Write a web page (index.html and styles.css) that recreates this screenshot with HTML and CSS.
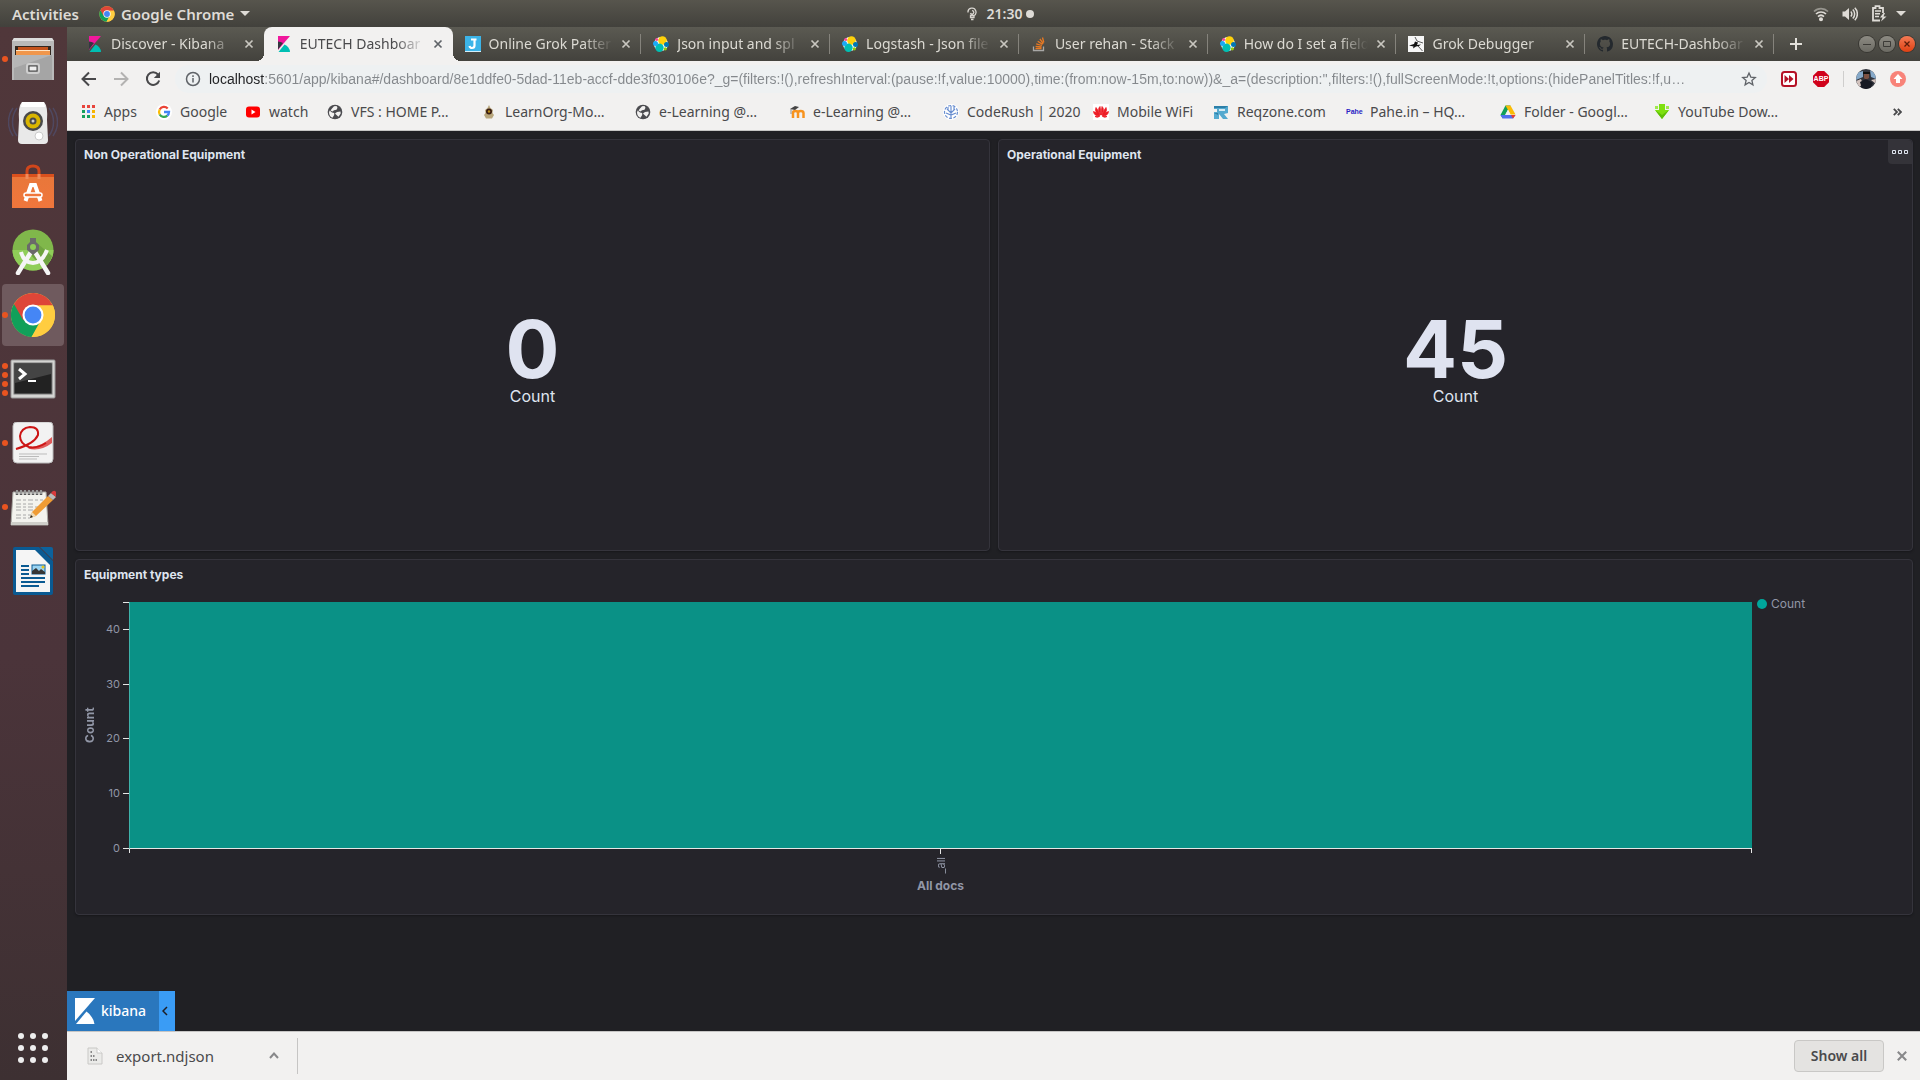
FILE: index.html
```html
<!DOCTYPE html>
<html lang="en">
<head>
<meta charset="utf-8">
<title>EUTECH Dashboard - Kibana</title>
<link rel="stylesheet" href="styles.css">
</head>
<body>
<svg class="defs" aria-hidden="true">
  <symbol id="i-chrome" viewBox="0 0 48 48">
    <circle cx="24" cy="24" r="23" fill="#ffcd40"/>
    <path d="M24 24 4.100 12.500A23 23 0 0 0 22.500 47L34 29.800Z" fill="#11a05a"/>
    <path d="M4.100 12.500A23 23 0 0 1 44.700 14H24L14 29.800Z" fill="#de4638"/>
    <path d="M24 24H35L22.500 47 24 47A23 23 0 0 0 44.700 14L30 14Z" fill="#ffcd40"/>
    <circle cx="24" cy="24" r="11" fill="#fff"/><circle cx="24" cy="24" r="8.800" fill="#4586f5"/>
  </symbol>
  <symbol id="i-kibana" viewBox="0 0 16 16">
    <path d="M2 0H14L2 14Z" fill="#f0189c"/><path d="M2 5.500a12 12 0 0 1 5 1.600L2 13.500Z" fill="#343741"/>
    <path d="M2.500 16 8.500 8.500A9 9 0 0 1 14 16Z" fill="#00bfb3"/>
  </symbol>
  <symbol id="i-elastic" viewBox="0 0 16 16">
    <circle cx="8" cy="8" r="7" fill="#fff"/><circle cx="9.500" cy="4.500" r="4.300" fill="#fed10a"/>
    <circle cx="6.500" cy="11.700" r="4.200" fill="#00bfb3"/><circle cx="3.700" cy="3.500" r="1.600" fill="#f04e98"/>
    <circle cx="2.500" cy="7.500" r="2.500" fill="#1ba9f5"/><circle cx="13.500" cy="8.600" r="2.500" fill="#0077b5"/>
    <circle cx="12.300" cy="12.800" r="1.600" fill="#93c90e"/>
  </symbol>
  <symbol id="i-close" viewBox="0 0 10 10"><path d="M1.500 1.500 8.500 8.500M8.500 1.500 1.500 8.500" stroke="currentColor" stroke-width="1.700" fill="none"/></symbol>
  <symbol id="i-globe" viewBox="0 0 16 16">
    <circle cx="8" cy="8" r="7.300" fill="#4b4b4f"/>
    <path d="M2.600 6.500 5 8.600 7.200 9v2l-1.700 2.800A6 6 0 0 1 2 8.500ZM7 2.200l2.500-.200 1 1.800-1 2-2.500.500-1.500 1.200-2-1L5 4.500ZM10 8l3.500-.500.200 2-2.200 3.300L9.500 11 8 9.500Z" fill="#f2f1f0"/>
  </symbol>
</svg>

<header class="topbar">
  <button class="top-item">Activities</button>
  <button class="top-item app-menu"><svg width="16" height="16"><use href="#i-chrome"/></svg>Google Chrome<span class="caret"></span></button>
  <div class="clock">
    <svg width="10" height="14" viewBox="0 0 10 14" fill="none" stroke="#d8d5d0" stroke-width="1.300"><path d="M1 5.500a4 4 0 1 1 5.500 3.300M3.500 6a1.700 1.700 0 1 0 1.500-2.300M3.500 8.500H7v2H3.500ZM4 12.500H6.500"/></svg>
    <time>21:30</time><span class="dot"></span>
  </div>
  <div class="tray">
    <svg width="16" height="16" viewBox="0 0 16 16" fill="none" stroke="#dedbd6" stroke-width="1.700"><path d="M1 5.500a10 10 0 0 1 14 0" opacity=".5"/><path d="M3 8a7.200 7.200 0 0 1 10 0M5 10.600a4.500 4.500 0 0 1 6 0"/><circle cx="8" cy="13.300" r="1.200" fill="#dedbd6"/></svg>
    <svg width="16" height="16" viewBox="0 0 16 16" fill="none" stroke="#dedbd6" stroke-width="1.500"><path d="M.5 5.500H3L7 2v12L3 10.500H.5Z" fill="#dedbd6" stroke="none"/><path d="M8.800 5.500a3.500 3.500 0 0 1 0 5M10.800 3.500a6.400 6.400 0 0 1 0 9M12.800 1.800a8.800 8.800 0 0 1 0 12.400"/></svg>
    <svg width="16" height="17" viewBox="0 0 16 17" fill="none" stroke="#dedbd6" stroke-width="1.800"><path d="M9 15.500H2V3H4.500V1.200H8.500V3H12V8"/><path d="M4 6H10M4 8.800H9M4 11.600H8" stroke-width="1.500"/><path d="M12.500 8 9 12.500H11.500L10 16.500 15.500 11.500H12.500L14 8Z" fill="#dedbd6" stroke="none"/></svg>
    <span class="caret"></span>
  </div>
</header>

<div class="desktop">
<nav class="launcher" aria-label="Launcher">
  <button class="launch" aria-label="Files"><span class="pips"><i></i></span>
    <svg width="44" height="46" viewBox="0 0 44 46"><path d="M3 2H41L43 5V44H1V5Z" fill="#b9b9b9"/><path d="M3 2H41L43 5H1Z" fill="#dcdcdc"/><path d="M4 10H40V22H4Z" fill="#33271f"/><path d="M7 11H37V20H7Z" fill="#c4531c"/><path d="M5 14H39V20H5Z" fill="#f0964b"/><path d="M5 14H39V15H5Z" fill="#ffe4c4"/><path d="M3 19H41V44H3Z" fill="#a5a5a5"/><path d="M3 19H41L3 32Z" fill="#b6b6b6"/><rect x="16" y="28" width="12" height="9" rx="2" fill="#9c9c9c" stroke="#cfcfcf" stroke-width="2"/><rect x="18" y="30" width="8" height="5" fill="#eee" stroke="#444"/></svg></button>
  <button class="launch" aria-label="Rhythmbox">
    <svg width="50" height="46" viewBox="0 0 50 46"><g fill="none" stroke="#4f5a86" stroke-width="1.500" opacity=".5"><path d="M9 8a24 24 0 0 0 0 28M5 8a24 24 0 0 0 0 28M41 8a24 24 0 0 1 0 28M45 8a24 24 0 0 1 0 28"/></g><path d="M14 2H36Q40 6 39 20L40 40Q40 44 36 44H14Q10 44 10 40L11 20Q10 6 14 2Z" fill="#e9e9e9"/><path d="M14 2H36L37 7H13Z" fill="#fff"/><circle cx="25" cy="21" r="10" fill="#4a4a4a"/><circle cx="25" cy="21" r="7.500" fill="#d9b500"/><circle cx="25" cy="21" r="3.500" fill="#4a4a4a"/><circle cx="25" cy="21" r="1.500" fill="#d0d0d0"/><circle cx="31" cy="36" r="4" fill="#fff" stroke="#ccc"/></svg></button>
  <button class="launch" aria-label="Ubuntu Software">
    <svg width="44" height="46" viewBox="0 0 44 46"><defs><linearGradient id="bag" x2="0" y2="1"><stop stop-color="#e8773a"/><stop offset="1" stop-color="#f0763c"/></linearGradient></defs><path d="M16 16V7Q16 2 22 2T28 7V16" fill="none" stroke="#d0461b" stroke-width="3"/><path d="M1 10H43V44H1Z" fill="url(#bag)"/><path d="M1 10H43V13H1Z" fill="#d9501d"/><path d="M16 10V15M28 10V15" stroke="#ef8b5c" stroke-width="3"/><path d="M14.500 37 20 21H24L29.500 37" fill="none" stroke="#fff" stroke-width="4"/><rect x="13" y="29" width="18" height="4" rx="2" fill="#f0763c" stroke="#fff" stroke-width="1.500"/></svg></button>
  <button class="launch" aria-label="Android Studio">
    <svg width="44" height="48" viewBox="0 0 44 48"><circle cx="22" cy="23" r="20.500" fill="#80b74b"/><path d="M1.500 23a20.500 20.500 0 0 0 41 0Z" fill="#8fce58"/><path d="M26 16 41 29A20.500 20.500 0 0 1 32 41L18 26Z" fill="#6fa341"/><path d="M20 25 7 46M24 25 37 46" stroke="#f5f5f5" stroke-width="4.500" stroke-linecap="round"/><path d="M10 25Q13 36 22 36T36 23" fill="none" stroke="#f5f5f5" stroke-width="4"/><path d="M19 11H25V15L28 18V23L22 28 16 23V18L19 15Z" fill="#6a6a6a"/><circle cx="22" cy="20" r="3" fill="#8fce58"/></svg></button>
  <button class="launch active" aria-label="Google Chrome"><span class="pips"><i></i></span>
    <svg width="46" height="46"><use href="#i-chrome"/></svg></button>
  <button class="launch" aria-label="Terminal"><span class="pips"><i></i><i></i><i></i><i></i></span>
    <svg width="46" height="40" viewBox="0 0 46 40"><rect x="1" y="1" width="44" height="38" rx="1" fill="#d4d4d2" stroke="#999"/><rect x="4" y="4" width="38" height="31" fill="#222" stroke="#777"/><path d="M5 5H41V15L5 24Z" fill="#444"/><path d="M9 10 15 15 9 20" fill="none" stroke="#fff" stroke-width="3"/><path d="M18 22H26" stroke="#fff" stroke-width="2"/></svg></button>
  <button class="launch" aria-label="Document Viewer"><span class="pips"><i></i></span>
    <svg width="42" height="42" viewBox="0 0 42 42"><rect x="1" y="0" width="40" height="41" rx="4" fill="#f2f2f2" stroke="#bbb"/><path d="M18 25.500Q30 24 40 15V21Q28 30 16 26.500Z" fill="#e05a5a"/><path d="M4 27Q22 22 26 13 27 5 18 5 9 6 8 14 8 22 17 25 24 27 34 21" fill="none" stroke="#cc1515" stroke-width="2"/><path d="M7 32H35M7 34.500H27M7 37H25" stroke="#bbb"/></svg></button>
  <button class="launch" aria-label="Text Editor"><span class="pips"><i></i></span>
    <svg width="46" height="40" viewBox="0 0 46 40"><path d="M3 5H36L38 38H1Z" fill="#f3f3ee" stroke="#a9a9a4"/><path d="M1 35H38V38H1Z" fill="#cfcfca"/><g stroke="#a8a8a8" stroke-dasharray="5 2 3 2"><path d="M6 13H33M6 17H25M6 20H33M6 23H28M6 28H22M6 31H20"/></g><path d="M7 3V8M11 3V8M15 3V8M19 3V8M23 3V8M27 3V8M31 3V8" stroke="#555" stroke-width="2.500"/><path d="M7 3V7M11 3V7M15 3V7M19 3V7M23 3V7M27 3V7M31 3V7" stroke="#ddd"/><path d="M20 31 22 25 38 9 43 13 26 29Z" fill="#ef9c35"/><path d="M38 9 41 6 46 10 43 13Z" fill="#b9b9b9"/><path d="M41 6Q44 2 46 5V10Z" fill="#d9393c"/><path d="M20 31 22 25 26 29Z" fill="#eddab6"/><path d="M20 31 21 28 23 30Z" fill="#222"/></svg></button>
  <button class="launch" aria-label="LibreOffice Writer">
    <svg width="40" height="48" viewBox="0 0 40 48"><path d="M2 0H26L40 14V46Q40 48 38 48H2Q0 48 0 46V2Q0 0 2 0Z" fill="#0a5a92"/><path d="M27 0H38Q40 0 40 2V13Z" fill="#0c629c"/><path d="M3 3H22L37 18V45H3Z" fill="#f5f5f5"/><path d="M8 19H16M8 23H16M8 27H16M8 31H32M8 35H32M8 39H26" stroke="#0a5a92" stroke-width="2"/><rect x="19" y="18" width="13" height="9" fill="#9ad4f2" stroke="#0a5a92"/><path d="M19 27V24L23 21 26 24 28 22 32 25V27Z" fill="#363636"/><circle cx="30" cy="20" r="1.500" fill="#e8c51c"/></svg></button>
  <button class="launch show-apps" aria-label="Show Applications">
    <svg width="32" height="32" viewBox="0 0 32 32" fill="#eee"><circle cx="4" cy="4" r="3"/><circle cx="16" cy="4" r="3"/><circle cx="28" cy="4" r="3"/><circle cx="4" cy="16" r="3"/><circle cx="16" cy="16" r="3"/><circle cx="28" cy="16" r="3"/><circle cx="4" cy="28" r="3"/><circle cx="16" cy="28" r="3"/><circle cx="28" cy="28" r="3"/></svg></button>
</nav>

<div class="browser">
  <div class="tabstrip">
    <div class="tabs">
      <div class="tab before-active"><svg width="16" height="16"><use href="#i-kibana"/></svg><a href="#" class="tab-title">Discover - Kibana</a><button class="tab-close" aria-label="Close tab"><svg width="10" height="10"><use href="#i-close"/></svg></button></div>
      <div class="tab current"><svg width="16" height="16"><use href="#i-kibana"/></svg><a href="#" class="tab-title">EUTECH Dashboar</a><button class="tab-close" aria-label="Close tab"><svg width="10" height="10"><use href="#i-close"/></svg></button></div>
      <div class="tab"><svg width="16" height="16" viewBox="0 0 16 16"><path d="M0 0H16V16H0Z" fill="#3cb4e8"/><path d="M0 15H16V16H0Z" fill="#d5eefa"/><path d="M6 3.500H11.500M9.500 3.500V9.500Q9.500 12 7 12 5 12 4.500 10" fill="none" stroke="#fff" stroke-width="2.200"/></svg><a href="#" class="tab-title">Online Grok Patter</a><button class="tab-close" aria-label="Close tab"><svg width="10" height="10"><use href="#i-close"/></svg></button></div>
      <div class="tab"><svg width="16" height="16"><use href="#i-elastic"/></svg><a href="#" class="tab-title">Json input and spl</a><button class="tab-close" aria-label="Close tab"><svg width="10" height="10"><use href="#i-close"/></svg></button></div>
      <div class="tab"><svg width="16" height="16"><use href="#i-elastic"/></svg><a href="#" class="tab-title">Logstash - Json file</a><button class="tab-close" aria-label="Close tab"><svg width="10" height="10"><use href="#i-close"/></svg></button></div>
      <div class="tab"><svg width="16" height="16" viewBox="0 0 16 16" fill="none" stroke-width="1.300"><path d="M2.500 10.500V14.500H12.500V10.500" stroke="#a8a8a6"/><path d="M4.500 12.500H10.500M4.600 10.300 10.600 11M5.200 7.800 10.900 9.500M6.700 5.200 11.600 8.400M8.900 3 12.300 7.600M11.500 1.500 12.800 6.500" stroke="#e87922"/></svg><a href="#" class="tab-title">User rehan - Stack</a><button class="tab-close" aria-label="Close tab"><svg width="10" height="10"><use href="#i-close"/></svg></button></div>
      <div class="tab"><svg width="16" height="16"><use href="#i-elastic"/></svg><a href="#" class="tab-title">How do I set a field</a><button class="tab-close" aria-label="Close tab"><svg width="10" height="10"><use href="#i-close"/></svg></button></div>
      <div class="tab"><svg width="16" height="16" viewBox="0 0 16 16"><path d="M0 0H16V16H0Z" fill="#f6f6f6"/><path d="M1 9.500 6 8 7 5.500 10 6.500 9 9 13 8.500 11 10 8 10.500 5 12.500 5.500 10.500Z" fill="#111"/><path d="M7 1 9 5 15 7M10 10 14.500 15" fill="none" stroke="#333" stroke-width=".8"/></svg><a href="#" class="tab-title">Grok Debugger</a><button class="tab-close" aria-label="Close tab"><svg width="10" height="10"><use href="#i-close"/></svg></button></div>
      <div class="tab"><svg width="16" height="16" viewBox="0 0 16 16"><path fill="#24292e" d="M8 0C3.580 0 0 3.580 0 8c0 3.540 2.290 6.530 5.470 7.590.4.070.55-.17.55-.38 0-.19-.01-.82-.01-1.490-2.010.37-2.530-.49-2.690-.94-.09-.23-.48-.94-.82-1.130-.28-.15-.68-.52-.01-.53.63-.01 1.080.58 1.230.82.72 1.210 1.870.87 2.330.66.070-.52.28-.87.51-1.070-1.780-.2-3.640-.89-3.640-3.950 0-.87.31-1.590.82-2.150-.08-.2-.36-1.020.08-2.120 0 0 .67-.21 2.200.82.64-.18 1.320-.27 2-.27s1.360.09 2 .27c1.530-1.040 2.200-.82 2.200-.82.44 1.100.16 1.920.08 2.120.51.56.82 1.270.82 2.150 0 3.070-1.870 3.750-3.650 3.950.29.25.54.73.54 1.480 0 1.070-.01 1.930-.01 2.200 0 .21.15.46.55.38A8.010 8.010 0 0 0 16 8c0-4.420-3.580-8-8-8z"/></svg><a href="#" class="tab-title">EUTECH-Dashboar</a><button class="tab-close" aria-label="Close tab"><svg width="10" height="10"><use href="#i-close"/></svg></button></div>
    </div>
    <button class="new-tab" aria-label="New tab"><svg width="12" height="12" viewBox="0 0 12 12"><path d="M6 0V12M0 6H12" stroke="#e3e1db" stroke-width="2"/></svg></button>
    <div class="win-buttons">
      <button class="win" aria-label="Minimize"><svg width="8" height="8" viewBox="0 0 8 8"><path d="M0 4.500H8" stroke="#3c3b37"/></svg></button>
      <button class="win" aria-label="Maximize"><svg width="8" height="8" viewBox="0 0 8 8"><path d="M.5 1.500H7.500V6.500H.5Z" fill="none" stroke="#3c3b37"/></svg></button>
      <button class="win win-close" aria-label="Close"><svg width="8" height="8" viewBox="0 0 8 8"><path d="M1.500 1.500 6.500 6.500M6.500 1.500 1.500 6.500" stroke="#5c1d0a" stroke-width="1.300"/></svg></button>
    </div>
  </div>

  <div class="toolbar">
    <button class="nav-btn" aria-label="Back"><svg width="16" height="16" viewBox="0 0 16 16" fill="none" stroke="#48484a" stroke-width="2"><path d="M15 8H2M8 1.500 1.500 8 8 14.500"/></svg></button>
    <button class="nav-btn" aria-label="Forward"><svg width="16" height="16" viewBox="0 0 16 16" fill="none" stroke="#b3b2b1" stroke-width="2"><path d="M1 8H14M8 1.500 14.500 8 8 14.500"/></svg></button>
    <button class="nav-btn" aria-label="Reload"><svg width="16" height="16" viewBox="0 0 16 16"><path d="M13 3.500A6.300 6.300 0 1 0 14.200 9.500" fill="none" stroke="#48484a" stroke-width="2"/><path d="M15 .8V7H8.800Z" fill="#48484a"/></svg></button>
    <div class="omnibox">
      <svg width="16" height="16" viewBox="0 0 16 16" fill="none" stroke="#5f6368" stroke-width="1.500"><circle cx="8" cy="8" r="6.500"/><path d="M8 7V11.500M8 4.300V6"/></svg>
      <input class="url" type="text" aria-label="Address" value="localhost:5601/app/kibana#/dashboard/8e1ddfe0-5dad-11eb-accf-dde3f030106e?_g=(filters:!(),refreshInterval:(pause:!f,value:10000),time:(from:now-15m,to:now))&amp;_a=(description:'',filters:!(),fullScreenMode:!t,options:(hidePanelTitles:!f,u…">
      <button class="plain" aria-label="Bookmark"><svg width="16" height="16" viewBox="0 0 16 16" fill="none" stroke="#5f6368" stroke-width="1.300"><path d="M8 2 9.800 6.100 14.300 6.500 10.900 9.500 11.900 13.900 8 11.500 4.100 13.900 5.100 9.500 1.700 6.500 6.200 6.100Z"/></svg></button>
    </div>
    <div class="extensions">
      <button class="plain" aria-label="Speed extension"><svg width="16" height="16" viewBox="0 0 16 16"><rect x="1" y="1" width="14" height="14" rx="2.500" fill="#fff" stroke="#b51226" stroke-width="2"/><path d="M3.500 4 8 8 3.500 12ZM8 4 12.500 8 8 12Z" fill="#b51226"/></svg></button>
      <button class="abp">ABP</button>
    </div>
    <div class="profile">
      <button class="plain" aria-label="Profile"><svg width="20" height="20" viewBox="0 0 20 20"><defs><clipPath id="av"><circle cx="10" cy="10" r="10"/></clipPath></defs><g clip-path="url(#av)"><path d="M0 0H20V20H0Z" fill="#31343c"/><path d="M0 4 7 2V8L0 11ZM14 1 20 5V10L15 8Z" fill="#86a9c9"/><path d="M0 12 5 10 7 15 3 18ZM15 11 20 10V15Z" fill="#d3c3be"/><path d="M8 4H13V9L10 11 8 9Z" fill="#7d5142"/><path d="M4 13 10 10 17 14 14 20H6Z" fill="#171a23"/><path d="M7 3H14V5H7Z" fill="#111"/></g></svg></button>
      <button class="plain" aria-label="Update"><svg width="16" height="16" viewBox="0 0 16 16"><circle cx="8" cy="8" r="8" fill="#f88379"/><path d="M8 3 12.500 8H10V12H6V8H3.500Z" fill="#fff"/></svg></button>
    </div>
  </div>

  <nav class="bookmarks" aria-label="Bookmarks">
    <a href="#"><svg width="16" height="16" viewBox="0 0 16 16"><path d="M2 1H5V4H2ZM12 1H15V4H12ZM7 1H10V4H7Z" fill="#e8453c"/><path d="M2 6H5V9H2ZM2 11H5V14H2ZM7 11H10V14H7Z" fill="#16a05d"/><path d="M7 6H10V9H7Z" fill="#4586f5"/><path d="M12 6H15V9H12ZM12 11H15V14H12Z" fill="#f6b400"/></svg>Apps</a>
    <a href="#"><svg width="16" height="16" viewBox="0 0 16 16" fill="none" stroke-width="2.300"><circle cx="8" cy="8" r="8" fill="#fff"/><path d="M3.700 5.500A5 5 0 0 1 11.700 4.500" stroke="#ea4335"/><path d="M3.700 5.500A5 5 0 0 0 3.700 10.500" stroke="#fbbc05"/><path d="M3.700 10.500A5 5 0 0 0 11.300 11.700" stroke="#34a853"/><path d="M8 8H13A5 5 0 0 1 11.300 11.700" stroke="#4285f4"/></svg>Google</a>
    <a href="#"><svg width="16" height="16" viewBox="0 0 16 16"><rect x="1" y="2.500" width="14" height="11" rx="3" fill="#f00"/><path d="M6.500 5.500 10.500 8 6.500 10.500Z" fill="#fff"/></svg>watch</a>
    <a href="#"><svg width="16" height="16"><use href="#i-globe"/></svg>VFS : HOME P…</a>
    <a href="#"><svg width="16" height="16" viewBox="0 0 16 16"><path d="M8 1 9.500 4 12 6 11.500 9 13 11 11 14.500H5L3 11 4.500 9 4 6 6.500 4Z" fill="#b8a67c"/><circle cx="8" cy="7.500" r="3" fill="#3a1d12"/><circle cx="8" cy="7.500" r="1.200" fill="#b98d1c"/></svg>LearnOrg-Mo…</a>
    <a href="#"><svg width="16" height="16"><use href="#i-globe"/></svg>e-Learning @…</a>
    <a href="#"><svg width="16" height="16" viewBox="0 0 16 16"><path d="M4 14V9Q4 7 6.500 7T9 9V14M9 14V9Q9 7 11.700 7T14.500 9V14" fill="none" stroke="#f7931e" stroke-width="2.500"/><path d="M1 5 6 2 10 3 6 6Z" fill="#444"/><path d="M2 5V10" stroke="#777" stroke-width=".8"/></svg>e-Learning @…</a>
    <a href="#"><svg width="16" height="16" viewBox="0 0 16 16"><circle cx="8" cy="8" r="8" fill="#fff"/><g fill="none" stroke="#6a8fd0" stroke-width="1.200"><circle cx="8" cy="8" r="6.500" stroke-dasharray="3 1.500"/><path d="M8 2V14M4 5 8 9 12 5M3 9 8 11 13 9M5 3V6M11 3V6"/></g></svg>CodeRush | 2020</a>
    <a href="#"><svg width="16" height="16" viewBox="0 0 16 16"><path d="M0 0H16V16H0Z" fill="#fff"/><path d="M7.500 11Q4 5 7 2.500 8 7 7.500 11ZM8.500 11Q12 5 9 2.500 8 7 8.500 11ZM7 11.500Q1 8 3 3.500 6 7 7 11.500ZM9 11.500Q15 8 13 3.500 10 7 9 11.500ZM6.500 12Q1 12 .5 7.500 5 9 6.500 12ZM9.500 12Q15 12 15.500 7.500 11 9 9.500 12ZM6.500 12.500Q4 14 2 12.500ZM9.500 12.500Q12 14 14 12.500Z" fill="#ed1c24" stroke="#ed1c24" stroke-width=".8"/></svg>Mobile WiFi</a>
    <a href="#"><svg width="16" height="16" viewBox="0 0 16 16"><path d="M1 2H15V9L11 10 15 15H10L6 10V15H1V8H4V5H1Z" fill="#54a9cf"/><path d="M6 5H12V7H6Z" fill="#d5eaf3"/><path d="M1 2H15L12 4H1ZM1 9H5V11Z" fill="#2c7fa8"/></svg>Reqzone.com</a>
    <a href="#"><span class="pahe">Pahe</span>Pahe.in – HQ…</a>
    <a href="#"><svg width="16" height="16" viewBox="0 0 16 16"><path d="M5.500 1.500H10.500L5 11 2.700 14.500 .5 11Z" fill="#11a05a"/><path d="M10.500 1.500 15.500 10.500H10.500L5.500 1.500Z" fill="#fbbc05"/><path d="M.5 11H15.500L13 14.500H2.700Z" fill="#4f6ff0"/><path d="M15.500 11 13 14.500 11 11Z" fill="#ea3c2e"/><path d="M8 5.500 10.500 10.500H5.500Z" fill="#f2f1f0"/></svg>Folder - Googl…</a>
    <a href="#"><svg width="16" height="16" viewBox="0 0 16 16"><path d="M5 0H11V6H15L8 15 1 6H5Z" fill="#7fe00f"/><path d="M1 2H4V5H1ZM12 2H15V5H12Z" fill="#9fe84c"/><path d="M1 6 8 15 15 6 8 11Z" fill="#5fbf08"/></svg>YouTube Dow…</a>
    <button class="overflow" aria-label="More bookmarks"><svg width="9" height="8" viewBox="0 0 9 8" fill="none" stroke="#48484a" stroke-width="1.800"><path d="M.8.8 4 4 .8 7.200M4.800.8 8 4 4.800 7.200"/></svg></button>
  </nav>

  <main class="page">
    <div class="panels">
      <section class="panel">
        <h2>Non Operational Equipment</h2>
        <div class="metric"><strong>0</strong><span>Count</span></div>
      </section>
      <section class="panel">
        <h2>Operational Equipment</h2>
        <button class="panel-menu" aria-label="Panel options"><svg width="16" height="4" viewBox="0 0 16 4" fill="none" stroke="#dfe5ef"><path d="M.5.500H3.500V3.500H.5ZM6.500.500H9.500V3.500H6.500ZM12.500.500H15.500V3.500H12.500Z"/></svg></button>
        <div class="metric"><strong>45</strong><span>Count</span></div>
      </section>
      <section class="panel wide">
        <h2>Equipment types</h2>
        <div class="chart">
          <div class="y-title">Count</div>
          <div class="y-axis">
            <div></div><div><span>40</span></div><div><span>30</span></div><div><span>20</span></div><div><span>10</span></div><div><span>0</span></div>
          </div>
          <div class="plot"><div class="bar" style="height:100%"></div></div>
          <div class="legend"><span class="swatch"></span>Count</div>
          <div class="x-axis"><span class="x-tick"></span><span class="x-label">_all</span><span class="x-title">All docs</span></div>
        </div>
      </section>
    </div>
    <div class="kibana-exit">
      <a href="#" class="kibana-logo"><svg width="20" height="26" viewBox="0 0 20 26" fill="#fff"><path d="M0 0H20L0 23Z"/><path d="M1 26 11.500 13.500Q18 18 19.500 26Z"/></svg>kibana</a>
      <button class="kibana-toggle" aria-label="Exit full screen"><svg width="6" height="10" viewBox="0 0 6 10"><path d="M5 1 1 5 5 9" fill="none" stroke="#1d1e24" stroke-width="1.500"/></svg></button>
    </div>
  </main>

  <footer class="downloads">
    <a href="#" class="download">
      <svg width="16" height="18" viewBox="0 0 16 18"><path d="M1 1H10L15 6V17H1Z" fill="#ebebe9" stroke="#c9c8c6"/><path d="M10 1V6H15" fill="#fff" stroke="#c9c8c6"/><path d="M3.500 5H5M3.500 9H8M3.500 13H10" stroke="#888" stroke-width="2" stroke-dasharray="1.500 1"/></svg>
      export.ndjson</a>
    <button class="plain" aria-label="Download options"><svg width="10" height="7" viewBox="0 0 10 7"><path d="M1 6 5 1.500 9 6" fill="none" stroke="#88888a" stroke-width="2"/></svg></button>
    <span class="divider"></span>
    <button class="show-all">Show all</button>
    <button class="plain dl-close" aria-label="Close downloads bar"><svg width="12" height="12"><use href="#i-close"/></svg></button>
  </footer>
</div>
</div>
</body>
</html>
```

FILE: styles.css
```css
* { box-sizing: border-box; }
body {
  margin: 0;
  min-height: 100vh;
  display: flex;
  flex-direction: column;
  font-family: "Noto Sans", "Open Sans", sans-serif;
  font-size: 14px;
  line-height: 20px;
  color: #4a4a4c;
  background: #202024;
}
button { font: inherit; color: inherit; background: none; border: 0; padding: 0; }
a { color: inherit; text-decoration: none; }
svg { display: block; flex: none; }
.defs { position: absolute; width: 0; height: 0; }

/* Desktop top bar */
.topbar {
  height: 27px;
  display: grid;
  grid-template-columns: auto 1fr auto 1fr;
  align-items: center;
  padding: 0 14px 0 12px;
  background: linear-gradient(#57554d, #42413c);
  color: #dedbd6;
  font-weight: 600;
  font-size: 15px;
}
.top-item { text-align: left; }
.app-menu { display: flex; align-items: center; gap: 6px; margin-left: 20px; }
.caret { border: 5px solid transparent; border-top-color: #dedbd6; border-bottom: 0; }
.clock { display: flex; align-items: center; gap: 10px; margin-left: 16px; font-size: 14px; }
.clock time { margin-right: -6px; }
.dot { width: 8px; height: 8px; border-radius: 50%; background: #dedbd6; }
.tray { display: flex; align-items: center; justify-content: flex-end; gap: 13px; }
.tray .caret { margin-left: -4px; }

.desktop { flex: 1; display: flex; }

/* Launcher */
.launcher {
  width: 67px;
  flex: none;
  display: flex;
  flex-direction: column;
  gap: 2px;
  padding: 1px 3px 1px 2px;
  background: linear-gradient(#50373a, #4b343a 60%, #3d3032);
}
.launch {
  position: relative;
  height: 62px;
  display: flex;
  align-items: center;
  justify-content: center;
  border-radius: 4px;
}
.launch.active { background: #6f5a5e; }
.show-apps { margin-top: auto; }
.pips {
  position: absolute;
  left: 0;
  top: 0;
  bottom: 0;
  display: flex;
  flex-direction: column;
  justify-content: center;
  gap: 3px;
}
.pips i { width: 6px; height: 6px; border-radius: 50%; background: #e95420; }

/* Browser */
.browser { flex: 1; min-width: 0; display: flex; flex-direction: column; }
.tabstrip {
  height: 34px;
  display: flex;
  align-items: stretch;
  padding: 0 5px 0 8px;
  background: linear-gradient(#5b5a52, #43423d);
  color: #dcdad3;
}
.tabs { flex: 1; min-width: 0; display: grid; grid-template-columns: repeat(9, 1fr); }
.tab {
  min-width: 0;
  display: flex;
  align-items: center;
  padding: 0 10px 0 12px;
  background: linear-gradient(#85837c, #85837c) right center / 1px 20px no-repeat;
}
.tab.before-active { background: none; }
.tab.current { position: relative; background: #f2f1f0; border-radius: 8px 8px 0 0; color: #4a4a4c; }
.tab.current::before, .tab.current::after {
  content: "";
  position: absolute;
  bottom: 0;
  width: 8px;
  height: 8px;
}
.tab.current::before { left: -8px; background: radial-gradient(circle at 0 0, transparent 8px, #f2f1f0 8px); }
.tab.current::after { right: -8px; background: radial-gradient(circle at 100% 0, transparent 8px, #f2f1f0 8px); }
.tab-title {
  flex: 1;
  min-width: 0;
  margin: 0 8px;
  overflow: hidden;
  white-space: nowrap;
  mask-image: linear-gradient(to right, #000 calc(100% - 30px), transparent);
}
.tab-close { color: #c9c7c0; }
.current .tab-close { color: #5f6368; }
.new-tab { width: 44px; display: flex; align-items: center; justify-content: center; }
.win-buttons { display: flex; align-items: center; gap: 4px; margin-left: 41px; }
.win {
  width: 16px;
  height: 16px;
  display: flex;
  align-items: center;
  justify-content: center;
  border-radius: 50%;
  background: linear-gradient(#8d8b83, #6b6a63);
  box-shadow: 0 0 0 1px #393833;
}
.win-close { background: linear-gradient(#f47b55, #df4012); }

.toolbar {
  height: 36px;
  display: flex;
  align-items: center;
  padding: 0 14px;
  background: #f2f1f0;
}
.nav-btn { margin-right: 16px; }
.omnibox {
  flex: 1;
  height: 28px;
  display: flex;
  align-items: center;
  gap: 8px;
  padding: 0 10px;
  border-radius: 14px;
  background: #eef1f2;
  margin-left: -2px;
}
.url {
  flex: 1;
  min-width: 0;
  height: 20px;
  padding: 0;
  border: 0;
  font: 14px/20px "Liberation Sans", sans-serif;
  text-overflow: ellipsis;
  color: transparent;
  background: linear-gradient(to right, #202124 56px, #84888c 56px);
  background-clip: text;
}
.extensions { display: flex; gap: 16px; align-items: center; margin-left: 14px; padding-right: 14px; border-right: 1px solid #cfcecd; }
.abp {
  width: 16px;
  height: 16px;
  background: #d0021b;
  color: #fff;
  font: bold 7px/16px "Liberation Sans", sans-serif;
  clip-path: polygon(30% 0, 70% 0, 100% 30%, 100% 70%, 70% 100%, 30% 100%, 0 70%, 0 30%);
}
.profile { display: flex; gap: 14px; align-items: center; padding-left: 12px; }

.bookmarks {
  height: 34px;
  display: grid;
  grid-template-columns: 76px 89px 82px repeat(4, 154px) 150px 120px 133px 154px 154px 1fr auto;
  align-items: center;
  padding: 0 18px 4px 13px;
  background: #f2f1f0;
  border-bottom: 1px solid #c6c5c4;
}
.bookmarks a { display: flex; align-items: center; gap: 8px; white-space: nowrap; }
.pahe { width: 16px; color: #2a1fc4; font: bold 7px/16px "Liberation Sans", sans-serif; }

/* Dashboard */
.page {
  flex: 1;
  display: flex;
  flex-direction: column;
  background: #202024;
  font-family: Inter, "Liberation Sans", sans-serif;
  color: #dfe5ef;
}
.panels {
  display: grid;
  grid-template-columns: 1fr 1fr;
  grid-template-rows: minmax(412px, auto) minmax(356px, auto);
  gap: 8px;
  padding: 8px 7px 8px 8px;
}
.panel {
  position: relative;
  display: flex;
  flex-direction: column;
  background: #25242a;
  border: 1px solid #35343c;
  border-radius: 4px;
  box-shadow: 0 1px 2px #18181b;
}
.wide { grid-column: 1 / -1; }
.panel h2 { margin: 0; padding: 5px 8px; font-size: 12px; line-height: 20px; font-weight: 700; }
.panel-menu {
  position: absolute;
  top: 0;
  right: 0;
  width: 24px;
  height: 24px;
  display: flex;
  align-items: center;
  justify-content: center;
  background: #343339;
  border-radius: 0 4px 0 4px;
}
.metric {
  flex: 1;
  display: flex;
  flex-direction: column;
  align-items: center;
  justify-content: center;
  padding-top: 2px;
  font-size: 16px;
  line-height: 24px;
}
.metric strong { font-size: 80px; line-height: 70px; font-weight: 700; color: #dfe3f0; }
.chart {
  flex: 1;
  display: grid;
  grid-template-columns: 12px 33px 1fr 160px;
  grid-template-rows: 247px auto;
  padding: 12px 0 0 8px;
  font-size: 12px;
  line-height: 16px;
  color: #9196a6;
}
.y-title { writing-mode: vertical-rl; transform: rotate(180deg); text-align: center; font-weight: 700; line-height: 12px; }
.y-axis {
  display: grid;
  grid-template-rows: 1px 27fr 55fr 55fr 55fr 55fr;
  font-size: 11px;
}
.y-axis div {
  display: flex;
  align-items: flex-end;
  justify-content: flex-end;
  padding-right: 9px;
  background: linear-gradient(#e6e6e6, #e6e6e6) right bottom / 6px 1px no-repeat;
}
.y-axis span { margin-bottom: -7px; }
.plot { border-left: 1px solid #3fb3aa; border-bottom: 1px solid #e6e6e6; }
.bar { background: #0a9186; }
.legend { display: flex; align-items: center; align-self: start; gap: 4px; padding-left: 5px; margin-top: -6px; }
.swatch { width: 10px; height: 10px; border-radius: 50%; background: #00a69b; }
.x-axis {
  grid-column: 3;
  display: flex;
  flex-direction: column;
  align-items: center;
  border: 1px solid #e6e6e6;
  border-width: 0 1px;
  border-image: linear-gradient(#e6e6e6 5px, transparent 5px) 1;
}
.x-tick { width: 1px; height: 5px; background: #e6e6e6; }
.x-label { writing-mode: vertical-rl; transform: rotate(180deg); margin-top: 3px; font-size: 11px; line-height: 12px; }
.x-title { font-weight: 700; margin-top: 4px; }

.kibana-exit { display: flex; align-self: flex-start; height: 40px; margin-top: auto; }
.kibana-logo {
  width: 92px;
  display: flex;
  align-items: center;
  gap: 6px;
  padding-left: 8px;
  background: #2a77bd;
  color: #fff;
  font: 500 14px/20px "Noto Sans", sans-serif;
}
.kibana-toggle { width: 16px; display: flex; align-items: center; justify-content: center; padding-right: 5px; background: #3a9cf5; }

/* Downloads */
.downloads {
  height: 49px;
  display: flex;
  align-items: center;
  padding: 0 12px 1px 20px;
  background: #f2f1f0;
  border-top: 1px solid #c6c5c4;
}
.download { width: 182px; display: flex; align-items: center; gap: 13px; font-size: 15px; }
.divider { width: 1px; height: 36px; background: #c6c5c4; margin-left: 18px; }
.show-all {
  margin-left: auto;
  width: 90px;
  height: 32px;
  border: 1px solid #c9c8c6;
  border-radius: 4px;
  background: #e4e3e1;
  font-weight: 600;
}
.dl-close { margin-left: 12px; color: #88888a; }
```
